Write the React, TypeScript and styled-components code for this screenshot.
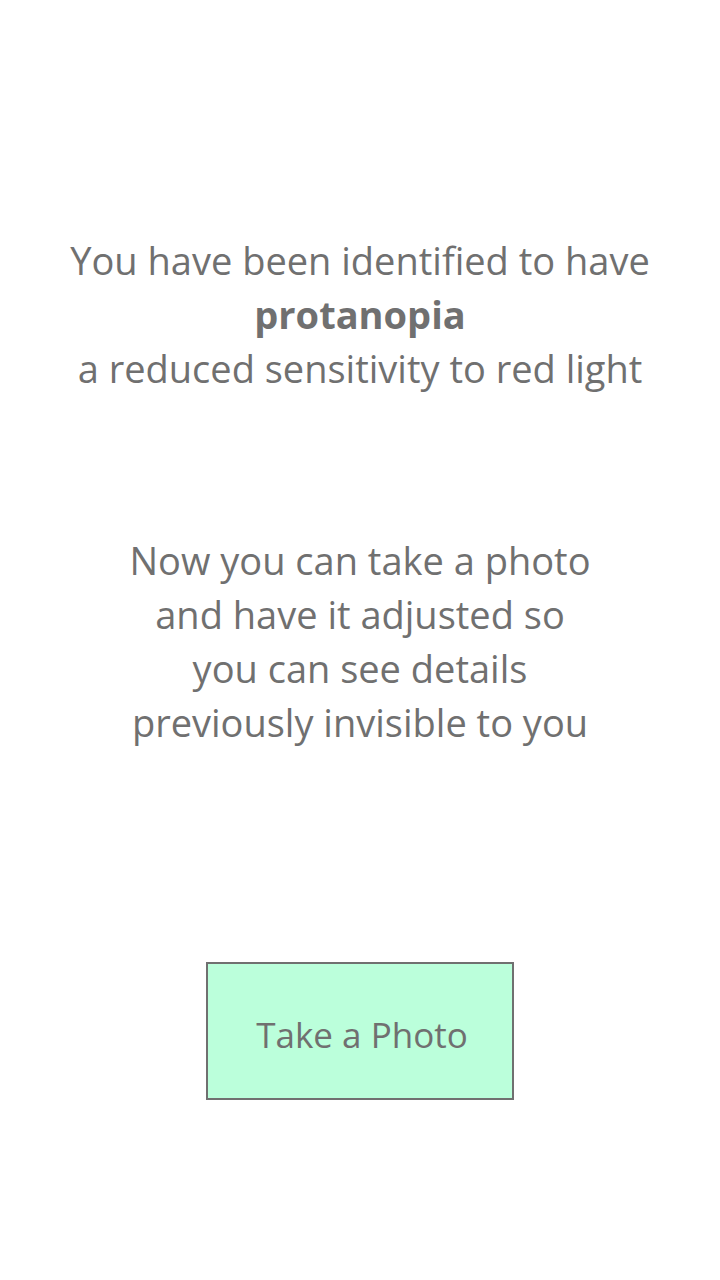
import React from "react";
import styled, { createGlobalStyle } from "styled-components";

const GlobalStyle = createGlobalStyle`
    html, body {
        margin: 0;
        padding: 0;
        background: #ffffff;
    }
    body {
        font-family: "Open Sans", "Noto Sans", sans-serif;
        color: #707070;
    }
`

const Page = styled.div`
    display: flex;
    flex-direction: column;
    align-items: center;
    width: 720px;
    min-height: 1280px;
    padding-top: 233px;
    box-sizing: border-box;
`

const Message = styled.p<{ $gap: number }>`
    margin: 0 0 ${(p) => p.$gap}px 0;
    font-size: 38px;
    line-height: 54px;
    text-align: center;
    white-space: pre-line;
`

const Strong = styled.span`
    display: block;
    font-weight: 700;
`

const PhotoButton = styled.button`
    width: 308px;
    height: 138px;
    box-sizing: border-box;
    border: 2px solid #707070;
    background-color: #bbffdb;
    color: #707070;
    font-family: inherit;
    font-size: 35px;
    padding: 6px 0 0 4px;
    cursor: pointer;
`

const App = () => {
    return (
        <>
            <GlobalStyle />
            <Page>
                <Message $gap={138}>
                    You have been identified to have
                    <Strong>protanopia</Strong>
                    a reduced sensitivity to red light
                </Message>
                <Message $gap={213}>
                    {"Now you can take a photo\nand have it adjusted so\nyou can see details\npreviously invisible to you"}
                </Message>
                <PhotoButton>Take a Photo</PhotoButton>
            </Page>
        </>
    );
};

export default App;
